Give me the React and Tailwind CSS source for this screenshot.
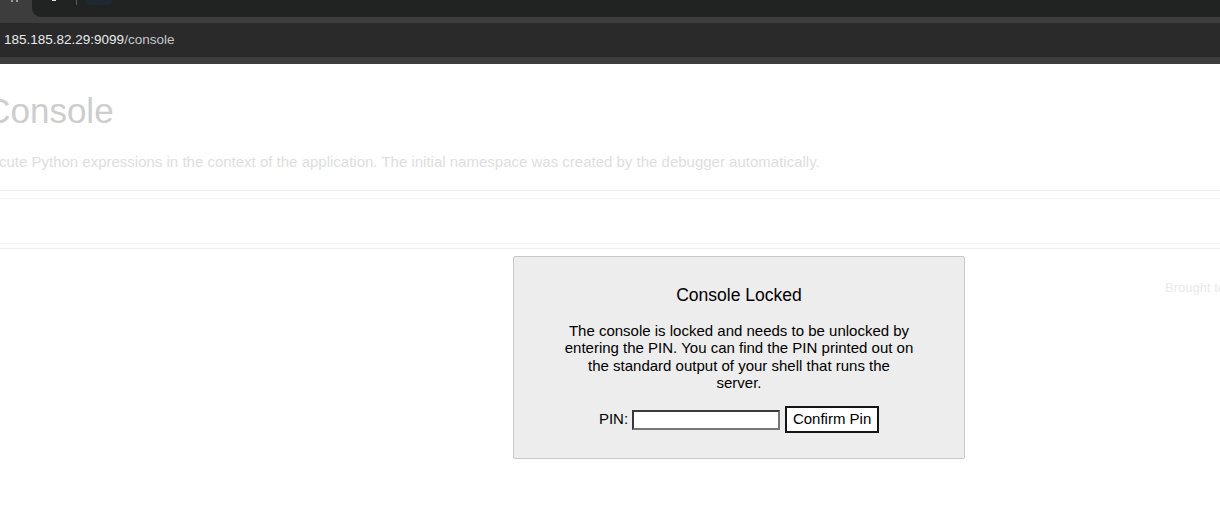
import React from "react"

const sans = { fontFamily: '"Liberation Sans", Arial, sans-serif' }

function BrowserChrome() {
  return (
    <div className="bg-[#3d3d3d]">
      {/* tab strip, cut off at the top */}
      <div className="flex h-[17px]">
        <div className="w-[32px] flex gap-[3px] pl-[11px]">
          <span className="w-[2px] h-[2px] bg-[#9a9a9a]" />
          <span className="w-[2px] h-[2px] bg-[#9a9a9a]" />
        </div>
        <div className="flex-1 flex items-start bg-[#212322] rounded-bl-[9px]">
          <span className="ml-[20px] w-[4px] h-[1px] bg-[#e0e0e0]" />
          <span className="ml-[20px] w-[1px] h-[5px] bg-[#5a5a5a]" />
          <span className="ml-[8px] w-[28px] h-[5px] rounded-b-full bg-[#1e2833]" />
        </div>
      </div>
      <div className="h-[6px]" />
      {/* address bar */}
      <div className="h-[34px] bg-[#2a2a2a] flex items-center pl-[4px] text-[13.5px]" style={sans}>
        <span className="text-[#e8eaed]">185.185.82.29:9099</span>
        <span className="text-[#c4c7ca]">/console</span>
      </div>
      <div className="h-[7px]" />
    </div>
  )
}

function PinPrompt() {
  return (
    <div className="absolute inset-0">
      <div
        className="ml-[513px] mt-[192px] w-[452px] bg-[#ededed] border border-[#c8c8c8] rounded-[2px] px-[50px] py-[10px] text-center text-black"
        style={sans}
      >
        <h3 className="text-[17.55px] leading-[20px] font-normal mt-[17.5px]">Console Locked</h3>
        <p className="text-[15px] leading-[17.25px] mt-[17.5px]">
          The console is locked and needs to be unlocked by entering the PIN. You can find the PIN printed out on the
          standard output of your shell that runs the server.
        </p>
        <form className="flex items-center justify-center mt-[15px] mb-[15px] text-[15px]" onSubmit={(e) => e.preventDefault()}>
          <span>PIN:</span>
          <input
            type="text"
            name="pin"
            className="ml-[4px] w-[148px] h-[20px] bg-white border-2 border-t-[#3a3a3a] border-l-[#3a3a3a] border-r-[#767676] border-b-[#767676] outline-none"
          />
          <button
            type="submit"
            className="ml-[5px] w-[94px] h-[27px] bg-white border-2 border-[#151515] text-[15px] text-black"
            style={sans}
          >
            Confirm Pin
          </button>
        </form>
      </div>
    </div>
  )
}

export default function App() {
  return (
    <div className="w-[1220px] h-[520px] overflow-hidden bg-white flex flex-col">
      <BrowserChrome />

      {/* page, scrolled sideways; the overlay fades it out */}
      <div className="relative flex-1 overflow-hidden" style={sans}>
        <div className="-ml-[182px] w-[1500px] pt-[27px]">
          <h1 className="-ml-[4px] text-[35px] leading-[40px] font-normal text-[#cdcdcd] whitespace-nowrap">Interactive Console</h1>
          <p className="mt-[22px] text-[15px] leading-[17px] text-[#dedede] whitespace-nowrap">
            In this console you can execute Python expressions in the context of the application. The initial namespace was
            created by the debugger automatically.
          </p>
          <div className="mt-[20px] border-y border-[#efefef] pt-[7px] pb-[4px]">
            <div className="h-[46px] border-y border-[#f3f3f3]" />
          </div>
          <div className="mt-[31px] pl-[1347px] text-[13px] leading-[15px] text-[#e7eaeb] whitespace-nowrap">
            Brought to you by <strong>DON'T PANIC</strong>, your friendly Werkzeug powered traceback interpreter.
          </div>
        </div>

        <PinPrompt />
      </div>
    </div>
  )
}
